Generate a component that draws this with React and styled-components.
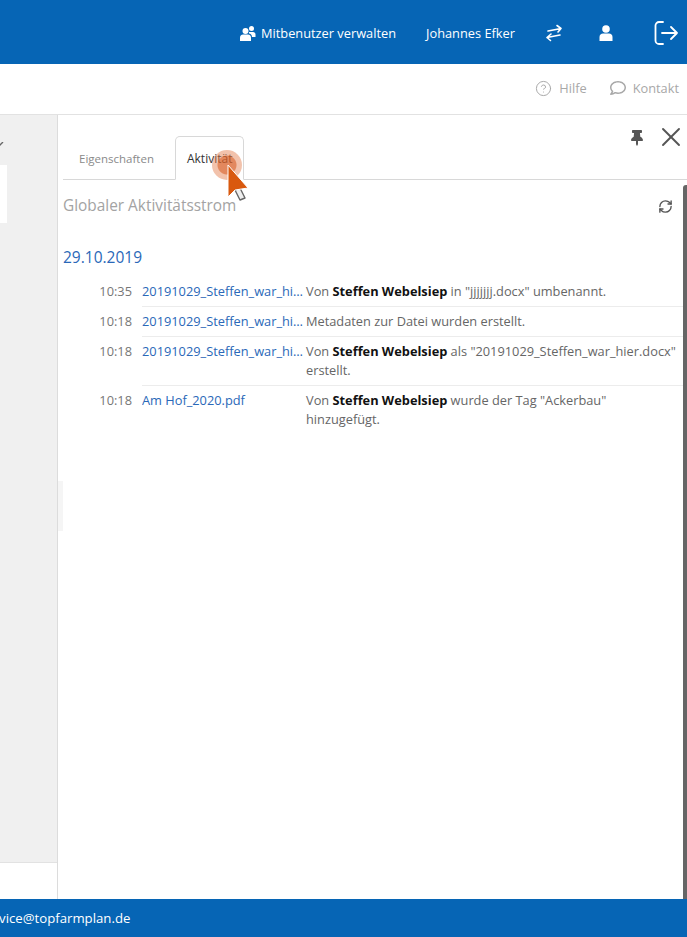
import styled, { createGlobalStyle } from 'styled-components';
import { FaRegComment, FaThumbtack } from 'react-icons/fa';
import { CircleHelp, RefreshCw, X } from 'lucide-react';

const GlobalStyle = createGlobalStyle`
    html, body {
        margin: 0;
        padding: 0;
        height: 100%;
        overflow: hidden;
        background: #fff;
    }
    body {
        font-family: "Open Sans", "Liberation Sans", sans-serif;
        font-size: 13px;
        color: #666;
    }
`;

const Page = styled.div`
    position: relative;
    width: 687px;
    height: 937px;
    display: flex;
    flex-direction: column;
    overflow: hidden;
`;

const Header = styled.header`
    height: 64px;
    flex: none;
    box-sizing: border-box;
    padding: 2px 9px 0 0;
    background: #0665b5;
    color: #fff;
    display: flex;
    align-items: center;
    justify-content: flex-end;
`;

const HeaderItem = styled.a`
    display: flex;
    align-items: center;
    gap: 5px;
    margin-left: ${(p) => p.$gap || 0}px;
    color: #fff;
    font-size: 12.8px;
`;

const SubBar = styled.div`
    height: 51px;
    flex: none;
    box-sizing: border-box;
    border-bottom: 1px solid #e2e2e2;
    display: flex;
    align-items: center;
    justify-content: flex-end;
    padding: 0 8px 2px 0;
`;

const SubLink = styled.a`
    display: flex;
    align-items: center;
    gap: 7px;
    margin-left: 23px;
    color: #a8a8a8;
    font-size: 12.8px;
`;

const Main = styled.main`
    flex: 1;
    min-height: 0;
    display: flex;
`;

const Sidebar = styled.aside`
    width: 57px;
    flex: none;
    display: flex;
    flex-direction: column;
    background: #f0f0f0;
`;

const Chevron = styled.svg`
    display: block;
    margin: 27px 0 0 -4px;
    flex: none;
`;

const SideCard = styled.div`
    width: 7px;
    height: 58px;
    margin-top: 17px;
    background: #fff;
`;

const SideSpacer = styled.div`
    flex: 1;
`;

const SideBottom = styled.div`
    height: 36px;
    flex: none;
    background: #fff;
    border-top: 1px solid #e2e2e2;
`;

const Panel = styled.section`
    position: relative;
    flex: 1;
    min-width: 0;
    border-left: 1px solid #dcdcdc;
    padding-left: 5px;
    display: flex;
    flex-direction: column;
`;

const ResizeHandle = styled.div`
    position: absolute;
    left: 0;
    top: 366px;
    width: 5px;
    height: 50px;
    background: #f5f5f5;
`;

const PanelTools = styled.div`
    position: absolute;
    top: 6px;
    right: 0;
    display: flex;
    align-items: center;
    gap: 10px;
    color: #555;

    & > svg:first-child {
        margin-top: 2px;
    }
`;

const Tabs = styled.div`
    height: 65px;
    flex: none;
    box-sizing: border-box;
    border-bottom: 1px solid #d8d8d8;
    display: flex;
    align-items: flex-end;
`;

const Tab = styled.div`
    box-sizing: border-box;
    height: 44px;
    margin-bottom: -1px;
    padding: 0 11px;
    display: flex;
    align-items: center;
    font-size: ${(p) => (p.$active ? '12px' : '11.5px')};
    color: ${(p) => (p.$active ? '#333' : '#8a8a8a')};
    background: ${(p) => (p.$active ? '#fff' : 'transparent')};
    border: 1px solid ${(p) => (p.$active ? '#d8d8d8' : 'transparent')};
    border-bottom-color: ${(p) => (p.$active ? '#fff' : 'transparent')};
    border-radius: 5px 5px 0 0;
    margin-left: ${(p) => (p.$active ? '9px' : '4px')};
`;

const StreamHead = styled.div`
    display: flex;
    align-items: center;
    justify-content: space-between;
    padding: 15px 14px 0 0;
`;

const StreamTitle = styled.h2`
    margin: 0;
    font-size: 15.4px;
    line-height: 22px;
    font-weight: 400;
    color: #a3a3a3;
`;

const DateLabel = styled.div`
    margin-top: 29px;
    font-size: 15.5px;
    line-height: 22px;
    color: #2a68b8;
`;

const Entries = styled.div`
    margin-top: 9px;
    padding-right: 4px;
`;

const Entry = styled.div`
    display: grid;
    grid-template-columns: 79px 1fr;
`;

const Time = styled.div`
    padding: 5px 10px 0 0;
    text-align: right;
    font-size: 12.8px;
    line-height: 19px;
    color: #777;
`;

const EntryBody = styled.div`
    display: grid;
    grid-template-columns: 164px 1fr;
    padding: 5px 0;
    border-bottom: 1px solid ${(p) => (p.$last ? 'transparent' : '#ececec')};
`;

const FileLink = styled.a`
    display: block;
    overflow: hidden;
    white-space: nowrap;
    text-overflow: ellipsis;
    font-size: 12.8px;
    line-height: 19px;
    color: #2a68b8;
    padding-right: 2px;
`;

const Message = styled.div`
    font-size: 12.8px;
    line-height: 19px;
    color: #666;

    & > b {
        font-weight: 700;
        color: #111;
    }
`;

const Scrollbar = styled.div`
    position: absolute;
    top: 70px;
    right: 0;
    bottom: 0;
    width: 4px;
    background: #666;
    border-radius: 3px 0 0 0;
`;

const Footer = styled.footer`
    height: 38px;
    flex: none;
    background: #0665b5;
    color: #fff;
    display: flex;
    align-items: center;
    font-size: 13.2px;
`;

const FooterMail = styled.span`
    margin-left: -20px;
`;

const Ripple = styled.div`
    position: absolute;
    left: 212px;
    top: 150px;
    width: 30px;
    height: 30px;
    border-radius: 50%;
    background: radial-gradient(circle, rgba(217, 96, 40, 0.75) 0 9px, rgba(226, 120, 70, 0.45) 10px 15px);
`;

const Cursor = styled.svg`
    position: absolute;
    left: 224px;
    top: 162px;
`;

const entries = [
    {
        time: '10:35',
        file: '20191029_Steffen_war_hier.docx',
        message: <>Von <b>Steffen Webelsiep</b> in "jjjjjjj.docx" umbenannt.</>,
    },
    {
        time: '10:18',
        file: '20191029_Steffen_war_hier.docx',
        message: <>Metadaten zur Datei wurden erstellt.</>,
    },
    {
        time: '10:18',
        file: '20191029_Steffen_war_hier.docx',
        message: <>Von <b>Steffen Webelsiep</b> als "20191029_Steffen_war_hier.docx" erstellt.</>,
    },
    {
        time: '10:18',
        file: 'Am Hof_2020.pdf',
        message: <>Von <b>Steffen Webelsiep</b> wurde der Tag "Ackerbau" hinzugefügt.</>,
        last: true,
    },
];

export default function App() {
    return (
        <Page>
            <GlobalStyle />
            <Header>
                <HeaderItem>
                    <svg width="17" height="16" viewBox="0 0 17 16" fill="#fff">
                        <circle cx="6.5" cy="6" r="3" />
                        <circle cx="12.5" cy="3.5" r="2.5" />
                        <path d="M1 16 V12.5 C1 10.5 2.5 9.5 4 9.5 H9 C10.5 9.5 12 10.5 12 12.5 V16 Z" />
                        <path d="M10 7 H14 C15.5 7 16.5 8 16.5 9.5 V12 H13 C13 10 11.5 8.5 10 8.5 Z" />
                    </svg>
                    Mitbenutzer verwalten
                </HeaderItem>
                <HeaderItem $gap={30}>Johannes Efker</HeaderItem>
                <HeaderItem $gap={30}>
                    <svg width="18" height="18" viewBox="0 0 18 18" fill="none" stroke="#fff" strokeWidth="1.6" strokeLinecap="round" strokeLinejoin="round">
                        <path d="M3 7 L16 4.5 M12 1.5 L16 4.5 L13 8" />
                        <path d="M15 11 L2 13.5 M6 10 L2 13.5 L5.5 16.5" />
                    </svg>
                </HeaderItem>
                <HeaderItem $gap={36}>
                    <svg width="14" height="16" viewBox="0 0 14 16" fill="#fff">
                        <circle cx="7" cy="4" r="3.8" />
                        <path d="M0.5 16 V12 C0.5 10 2 8.5 4 8.5 H10 C12 8.5 13.5 10 13.5 12 V16 Z" />
                    </svg>
                </HeaderItem>
                <HeaderItem $gap={41}>
                    <svg width="24" height="24" viewBox="0 0 24 24" fill="none" stroke="#fff" strokeWidth="1.8" strokeLinecap="round" strokeLinejoin="round">
                        <path d="M9 1 H5 A3.5 3.5 0 0 0 1.5 4.5 V19.5 A3.5 3.5 0 0 0 5 23 H9" />
                        <path d="M8 12 H23 M17 6 L23 12 L17 18" />
                    </svg>
                </HeaderItem>
            </Header>
            <SubBar>
                <SubLink>
                    <CircleHelp size={17} strokeWidth={1.4} />
                    Hilfe
                </SubLink>
                <SubLink>
                    <FaRegComment size={16} />
                    Kontakt
                </SubLink>
            </SubBar>
            <Main>
                <Sidebar>
                    <Chevron width="8" height="6" viewBox="0 0 8 6" fill="none" stroke="#666" strokeWidth="1.4">
                        <path d="M0 1 L3 4 L7 0" />
                    </Chevron>
                    <SideCard />
                    <SideSpacer />
                    <SideBottom />
                </Sidebar>
                <Panel>
                    <PanelTools>
                        <FaThumbtack size={16} />
                        <X size={32} strokeWidth={1.4} />
                    </PanelTools>
                    <Tabs>
                        <Tab>Eigenschaften</Tab>
                        <Tab $active>Aktivität</Tab>
                    </Tabs>
                    <StreamHead>
                        <StreamTitle>Globaler Aktivitätsstrom</StreamTitle>
                        <RefreshCw size={15} strokeWidth={2.2} color="#555" />
                    </StreamHead>
                    <DateLabel>29.10.2019</DateLabel>
                    <Entries>
                        {entries.map((entry, i) => (
                            <Entry key={i}>
                                <Time>{entry.time}</Time>
                                <EntryBody $last={entry.last}>
                                    <FileLink>{entry.file}</FileLink>
                                    <Message>{entry.message}</Message>
                                </EntryBody>
                            </Entry>
                        ))}
                    </Entries>
                    <ResizeHandle />
                    <Scrollbar />
                </Panel>
            </Main>
            <Footer>
                <FooterMail>service@topfarmplan.de</FooterMail>
            </Footer>
            <Ripple />
            <Cursor width="28" height="42" viewBox="0 0 28 42">
                <path d="M11 28 L16 38 L21 36 L16 26 Z" fill="#eee" stroke="#666" strokeWidth="1.4" strokeLinejoin="round" />
                <path d="M4 3 L4 35 L11 28 L24 26 Z" fill="#d9590f" stroke="#fff" strokeWidth="1" strokeLinejoin="round" />
            </Cursor>
        </Page>
    );
}
